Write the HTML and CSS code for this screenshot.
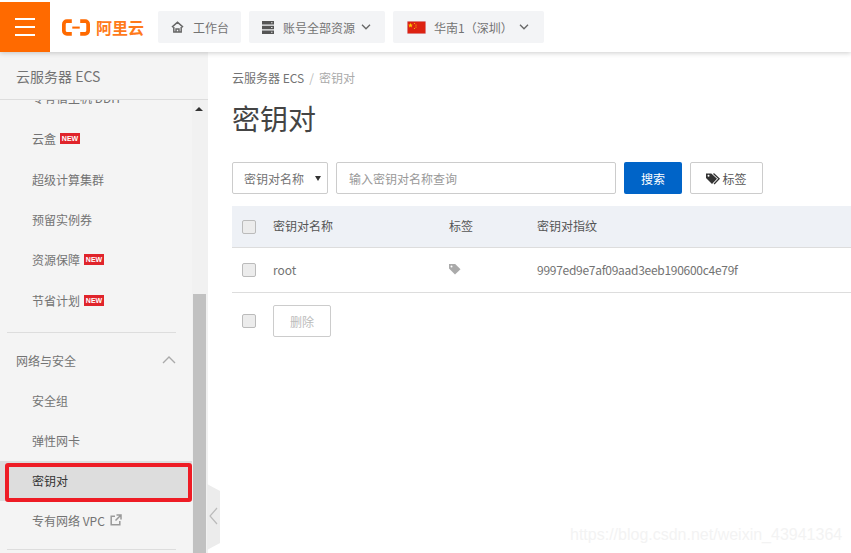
FILE: index.html
```html
<!DOCTYPE html>
<html lang="zh-CN">
<head>
<meta charset="utf-8">
<title>密钥对</title>
<link rel="stylesheet" href="styles.css">
</head>
<body>
<header class="topbar">
  <button class="burger" aria-label="菜单"><span></span><span></span><span></span></button>
  <div class="logo">
    <svg class="logo-mark" width="28" height="17" viewBox="0 0 30 18"><path d="M10.500 2.200H5.200C3.400 2.200 2 3.600 2 5.400v7.200c0 1.800 1.400 3.200 3.200 3.200h5.300M19.500 2.200h5.300c1.800 0 3.200 1.400 3.200 3.200v7.200c0 1.800-1.400 3.200-3.200 3.200h-5.300" fill="none" stroke="#ff6a00" stroke-width="4"/><rect x="11" y="8" width="8" height="2.200" fill="#ff6a00"/></svg>
    <span class="logo-text">阿里云</span>
  </div>
  <a class="top-btn home"><svg width="13" height="12" viewBox="0 0 14 13"><path d="M1 6.600 7 1.400l6 5.200M3 6.400V12h8V6.400M5.400 12V8.600h3.200V12" fill="none" stroke="#666" stroke-width="1.600"/></svg><span>工作台</span></a>
  <a class="top-btn account"><svg width="12" height="13" viewBox="0 0 12 13"><path d="M0 0h12v3.600H0zM0 4.700h12v3.600H0zM0 9.400h12V13H0z" fill="#555"/><path d="M9 1.300h1.500v1H9zM9 6h1.500v1H9zM9 10.700h1.500v1H9z" fill="#ddd"/></svg><span>账号全部资源</span><svg class="chev" width="10" height="6" viewBox="0 0 10 6"><path d="M1 .8l4 4 4-4" fill="none" stroke="#666" stroke-width="1.300"/></svg></a>
  <a class="top-btn region"><svg width="19" height="13" viewBox="0 0 19 13"><rect width="19" height="13" fill="#dde"/><rect x=".5" y=".5" width="18" height="12" fill="#dd2211"/><path d="M3.500 2l.7 1.600 1.600.1-1.200 1.100.4 1.700-1.500-.9-1.500.9.4-1.700L1.200 3.700l1.600-.1z" fill="#ffc800"/><circle cx="7.500" cy="2.500" r=".6" fill="#ffc800"/><circle cx="9" cy="4" r=".6" fill="#ffc800"/><circle cx="9" cy="6" r=".6" fill="#ffc800"/><circle cx="7.500" cy="7.500" r=".6" fill="#ffc800"/></svg><span>华南1（深圳）</span><svg class="chev wide" width="10" height="6" viewBox="0 0 10 6"><path d="M1 .8l4 4 4-4" fill="none" stroke="#666" stroke-width="1.300"/></svg></a>
</header>

<div class="layout">
  <aside class="sidebar">
    <div class="side-title">云服务器 ECS</div>
    <div class="side-scroll">
      <nav class="side-list">
        <a class="item">专有宿主机 DDH</a>
        <a class="item tall">云盒<i class="new">NEW</i></a>
        <a class="item">超级计算集群</a>
        <a class="item">预留实例券</a>
        <a class="item">资源保障<i class="new">NEW</i></a>
        <a class="item tall">节省计划<i class="new">NEW</i></a>
        <div class="divider"></div>
        <div class="group">网络与安全<svg width="14" height="8" viewBox="0 0 14 8"><path d="M1 7l6-6 6 6" fill="none" stroke="#aaa" stroke-width="1.400"/></svg></div>
        <a class="item">安全组</a>
        <a class="item before-active">弹性网卡</a>
        <a class="item active">密钥对</a>
        <a class="item vpc">专有网络 VPC<svg class="ext" width="12" height="12" viewBox="0 0 12 12"><path d="M9.800 7v3.800H1.200V2.200H5M6.500 1h4.500v4.500M11 1 5.500 6.500" fill="none" stroke="#999" stroke-width="1.500"/></svg></a>
        <div class="divider last"></div>
      </nav>
      <div class="scrollbar"><span class="arrow"></span><span class="thumb"></span></div>
    </div>
  </aside>

  <main class="main">
    <div class="crumbs"><span>云服务器 ECS</span><em>/</em><span class="cur">密钥对</span></div>
    <h1>密钥对</h1>
    <div class="toolbar">
      <div class="select"><span>密钥对名称</span><i class="caret"></i></div>
      <div class="input">输入密钥对名称查询</div>
      <button class="btn primary">搜索</button>
      <button class="btn tag"><svg width="16" height="13" viewBox="0 0 16 12"><path d="M0 1v4.500L6 11.500 11 6.200 5.300 1z" fill="#333"/><circle cx="2.500" cy="3.200" r="1" fill="#fff"/><path d="M7.500 1l5.600 5.200-5 5.300" fill="none" stroke="#333" stroke-width="1.300"/></svg>标签</button>
    </div>
    <div class="table">
      <div class="row head">
        <span class="check"></span><span class="c-name">密钥对名称</span><span class="c-tag">标签</span><span class="c-fp">密钥对指纹</span>
      </div>
      <div class="row body">
        <span class="check"></span><span class="c-name">root</span><span class="c-tag"><svg width="12" height="11" viewBox="0 0 12 11"><path d="M0 0v4.500L6 10.500 11.500 5.200 6.200 0z" fill="#aaa"/><circle cx="2.500" cy="2.500" r="1" fill="#fff"/></svg></span><span class="c-fp print">9997ed9e7af09aad3eeb190600c4e79f</span>
      </div>
      <div class="row foot">
        <span class="check"></span><button class="btn disabled">删除</button>
      </div>
    </div>
  </main>
</div>

<div class="highlight"></div>
<svg class="collapse" width="13" height="66" viewBox="0 0 13 66"><path d="M0 0l13 7v52L0 66z" fill="#ececec"/><path d="M10 24 3 32l7 8" fill="none" stroke="#bbb" stroke-width="1.200"/></svg>
<div class="watermark">https://blog.csdn.net/weixin_43941364</div>
</body>
</html>
```
FILE: styles.css
```css
* { box-sizing: border-box; }
html, body { margin: 0; height: 100%; overflow: hidden; }
body {
  width: 851px; height: 553px; background: #fff; position: relative;
  font-family: "Noto Sans CJK SC", "Noto Sans", sans-serif;
  font-size: 12px; color: #737373;
}
.topbar {
  height: 52px; display: flex; align-items: center; background: #fff;
  box-shadow: 0 1px 5px rgba(0,0,0,.2); position: relative; z-index: 2;
}
.burger {
  width: 50px; height: 50px; margin-top: 2px; flex: none; border: 0; padding: 0;
  background: #ff6a00; display: flex; flex-direction: column; align-items: center; justify-content: center; gap: 6px;
}
.burger span { width: 20px; height: 2px; background: #fff; display: block; }
.logo { display: flex; align-items: center; width: 96px; margin-left: 12px; margin-top: 2px; gap: 6px; flex: none; }
.logo-mark { flex: none; }
.logo-text { font-size: 16px; font-weight: 700; color: #ff7a1a; line-height: 18px; }
.top-btn {
  height: 32px; margin-top: 2px; margin-right: 8px; background: #f3f4f6; border-radius: 2px; display: flex; align-items: center;
  color: #737373; flex: none; padding-left: 13px;
}
.home { width: 83px; gap: 9px; }
.account { width: 136px; gap: 9px; }
.region { width: 151px; padding-left: 14px; gap: 8px; }
.chev { margin-left: -3px; }
.chev.wide { margin-left: -2px; }
.layout { display: flex; height: 501px; }
.sidebar { width: 208px; flex: none; background: #f4f4f4; display: flex; flex-direction: column; overflow: hidden; }
.side-title { height: 48px; flex: none; border-bottom: 1px solid #ddd; padding-left: 16px; display: flex; align-items: center; font-size: 14px; color: #737373; }
.side-scroll { flex: 1; display: flex; min-height: 0; overflow: hidden; }
.side-list { width: 192px; flex: none; margin-top: -23px; }
.item { height: 40px; display: flex; align-items: center; padding-left: 32px; color: #737373; }
.item.tall { height: 42px; }
.item.before-active { height: 41px; }
.item.active { background: #ddd; color: #333; padding-bottom: 2px; }
.item.vpc { height: 38px; }
.new { font-style: normal; font-family: "Liberation Sans", sans-serif; font-size: 7px; font-weight: 700; line-height: 11px; height: 11px; width: 20px; text-align: center; background: #e0242b; color: #fff; margin-left: 4px; margin-top: 1px; }
.divider { height: 1px; background: #ddd; margin: 11px 16px 0 7px; }
.divider.last { margin-top: 10px; }
.group { height: 54px; padding: 0 16px; display: flex; align-items: center; justify-content: space-between; color: #737373; margin-bottom: -7px; }
.ext { margin-left: 5px; }
.scrollbar { width: 16px; background: #f1f1f1; flex: none; }
.arrow { display: block; margin: 7px auto 0 3px; width: 0; height: 0; border: 4px solid transparent; border-bottom: 4px solid #333; border-top: 0; }
.thumb { display: block; width: 13px; height: 260px; background: #c1c1c1; margin: 183px 0 0 1px; }
.main { flex: 1; padding: 19px 0 0 24px; min-width: 0; }
.crumbs { display: flex; gap: 5px; line-height: 14px; height: 14px; align-items: center; }
.crumbs em { font-style: normal; color: #bbb; }
.crumbs .cur { color: #aaa; }
h1 { margin: 12px 0 0; font-weight: 400; font-size: 28px; line-height: 42px; color: #444; height: 42px; }
.toolbar { display: flex; margin-top: 23px; gap: 8px; height: 32px; }
.select, .input { height: 32px; border: 1px solid #ccc; border-radius: 2px; background: #fff; display: flex; align-items: center; }
.select { width: 96px; padding-left: 11px; position: relative; }
.caret { position: absolute; right: 6px; top: 13px; width: 0; height: 0; border: 3.500px solid transparent; border-top: 5px solid #333; border-bottom: 0; }
.input { width: 280px; padding-left: 12px; color: #999; }
.btn { font: inherit; height: 32px; border-radius: 2px; padding: 0; display: flex; align-items: center; justify-content: center; }
.primary { width: 58px; background: #0064c8; border: 0; color: #fff; }
.tag { width: 73px; background: #fff; border: 1px solid #ccc; color: #555; }
.table { margin-top: 12px; }
.row { display: flex; align-items: center; border-bottom: 1px solid #ddd; }
.head { height: 42px; background: #eef1f6; color: #555; }
.body { height: 45px; }
.foot { height: 56px; border-bottom: 0; }
.check { width: 14px; height: 14px; margin-left: 10px; flex: none; background: #ececec; border: 1px solid #bbb; border-radius: 2px; }
.c-name { margin-left: 17px; width: 176px; flex: none; padding-bottom: 2px; }
.c-tag { width: 88px; flex: none; display: flex; padding-bottom: 2px; }
.c-fp { flex: none; padding-bottom: 2px; }
.print { letter-spacing: -.28px; }
.disabled { width: 58px; margin-left: 17px; background: #fff; border: 1px solid #ccc; color: #bbb; }
.highlight { position: absolute; left: 5px; top: 463px; width: 187px; height: 39px; border: 4px solid #ee1c25; border-radius: 3px; }
.collapse { position: absolute; left: 207px; top: 484px; }
.watermark { position: absolute; left: 570px; top: 525px; font-family: "Liberation Sans", sans-serif; font-size: 16px; line-height: 20px; color: #f3f3f3; }
```
